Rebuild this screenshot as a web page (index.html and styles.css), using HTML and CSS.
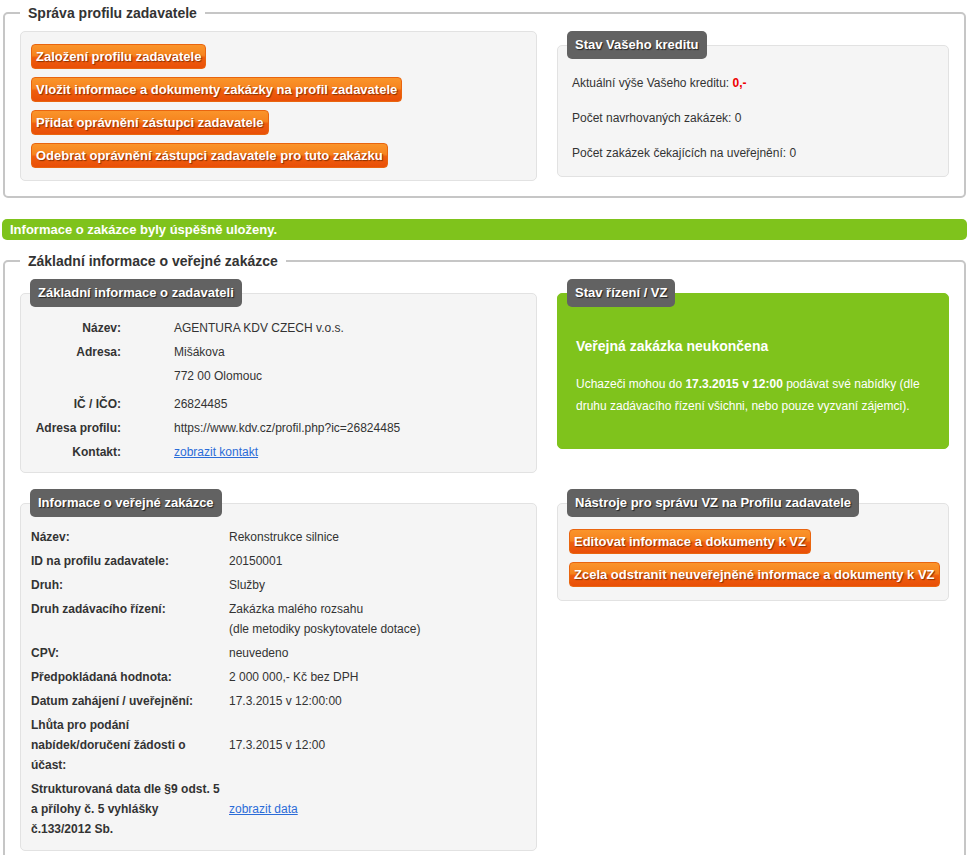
FILE: index.html
```html
<!DOCTYPE html>
<html lang="cs">
<head>
    <meta charset="UTF-8">
    <meta name="viewport" content="width=device-width, initial-scale=1.0">
    <title>Profil zadavatele</title>
    <link rel="stylesheet" href="styles.css">
</head>
<body>
    <fieldset class="sekce">
        <legend>Správa profilu zadavatele</legend>
        <div class="mrizka">
            <div class="box tlacitka">
                <a href="#" class="btn">Založení profilu zadavatele</a>
                <a href="#" class="btn">Vložit informace a dokumenty zakázky na profil zadavatele</a>
                <a href="#" class="btn">Přidat oprávnění zástupci zadavatele</a>
                <a href="#" class="btn">Odebrat oprávnění zástupci zadavatele pro tuto zakázku</a>
            </div>
            <div class="panel">
                <div class="stitek">Stav Vašeho kreditu</div>
                <div class="box kredit">
                    <p>Aktuální výše Vašeho kreditu: <span class="cervena">0,-</span></p>
                    <p>Počet navrhovaných zakázek: 0</p>
                    <p>Počet zakázek čekajících na uveřejnění: 0</p>
                </div>
            </div>
        </div>
    </fieldset>

    <div class="hlaska">Informace o zakázce byly úspěšně uloženy.</div>

    <fieldset class="sekce">
        <legend>Základní informace o veřejné zakázce</legend>
        <div class="mrizka">
            <div class="panel">
                <div class="stitek">Základní informace o zadavateli</div>
                <div class="box zadavatel">
                    <div class="popis">Název:</div>
                    <div class="hodnota">AGENTURA KDV CZECH v.o.s.</div>
                    <div class="popis">Adresa:</div>
                    <div class="hodnota">
                        <div class="radek">Mišákova</div>
                        <div class="radek">772 00 Olomouc</div>
                    </div>
                    <div class="popis">IČ / IČO:</div>
                    <div class="hodnota">26824485</div>
                    <div class="popis">Adresa profilu:</div>
                    <div class="hodnota">https://www.kdv.cz/profil.php?ic=26824485</div>
                    <div class="popis">Kontakt:</div>
                    <div class="hodnota"><a href="#">zobrazit kontakt</a></div>
                </div>
            </div>
            <div class="panel">
                <div class="stitek">Stav řízení / VZ</div>
                <div class="box zeleny">
                    <h2>Veřejná zakázka neukončena</h2>
                    <p>Uchazeči mohou do <b>17.3.2015 v 12:00</b> podávat své nabídky (dle<br>druhu zadávacího řízení všichni, nebo pouze vyzvaní zájemci).</p>
                </div>
            </div>
            <div class="panel">
                <div class="stitek">Informace o veřejné zakázce</div>
                <div class="box zakazka">
                    <div class="popis">Název:</div>
                    <div class="hodnota">Rekonstrukce silnice</div>
                    <div class="popis">ID na profilu zadavatele:</div>
                    <div class="hodnota">20150001</div>
                    <div class="popis">Druh:</div>
                    <div class="hodnota">Služby</div>
                    <div class="popis">Druh zadávacího řízení:</div>
                    <div class="hodnota">Zakázka malého rozsahu<br>(dle metodiky poskytovatele dotace)</div>
                    <div class="popis">CPV:</div>
                    <div class="hodnota">neuvedeno</div>
                    <div class="popis">Předpokládaná hodnota:</div>
                    <div class="hodnota">2 000 000,- Kč bez DPH</div>
                    <div class="popis">Datum zahájení / uveřejnění:</div>
                    <div class="hodnota">17.3.2015 v 12:00:00</div>
                    <div class="popis">Lhůta pro podání nabídek/doručení žádosti o účast:</div>
                    <div class="hodnota stred">17.3.2015 v 12:00</div>
                    <div class="popis">Strukturovaná data dle §9 odst. 5 a přílohy č. 5 vyhlášky č.133/2012 Sb.</div>
                    <div class="hodnota stred"><a href="#">zobrazit data</a></div>
                </div>
            </div>
            <div class="panel">
                <div class="stitek">Nástroje pro správu VZ na Profilu zadavatele</div>
                <div class="box tlacitka nastroje">
                    <a href="#" class="btn">Editovat informace a dokumenty k VZ</a>
                    <a href="#" class="btn">Zcela odstranit neuveřejněné informace a dokumenty k VZ</a>
                </div>
            </div>
        </div>
    </fieldset>
</body>
</html>
```

FILE: styles.css
```css
body {
    margin: 0;
    padding: 4px 3px 0 2px;
    font-family: "Liberation Sans", Arial, sans-serif;
    font-size: 12px;
    color: #333;
    background-color: #fff;
}
p {
    margin: 0;
}
a {
    color: #2b6cd8;
}
.sekce {
    margin: 0 1px;
    padding: 9px 15px 15px;
    border: 2px solid #c6c6c6;
    border-radius: 5px;
}
.sekce legend {
    padding: 0 8px;
    font-size: 14px;
    font-weight: bold;
    line-height: 18px;
    color: #333;
}
.mrizka {
    display: grid;
    grid-template-columns: 517px 1fr;
    column-gap: 20px;
    row-gap: 16px;
    align-items: start;
}
.box {
    background-color: #f5f5f5;
    border: 1px solid #e2e2e2;
    border-radius: 5px;
}
.panel {
    display: flex;
    flex-direction: column;
    align-items: flex-start;
}
.panel .box {
    align-self: stretch;
}
.stitek {
    position: relative;
    margin: 0 0 -14px 10px;
    padding: 0 8px;
    height: 28px;
    line-height: 28px;
    font-size: 13px;
    font-weight: bold;
    color: #fff;
    background-color: #626262;
    border-radius: 5px;
    text-shadow: 1px 1px 1px #222;
}
.tlacitka {
    display: flex;
    flex-direction: column;
    align-items: flex-start;
    gap: 8px;
    padding: 12px 10px;
}
.btn {
    display: block;
    padding: 3px 4px;
    font-size: 13px;
    font-weight: bold;
    line-height: 17px;
    white-space: nowrap;
    color: #fff;
    text-decoration: none;
    border: 1px solid #e9650f;
    border-radius: 4px;
    background: linear-gradient(to bottom, #fa942a 0%, #f6841f 45%, #ee5e0d 55%, #e94f08 100%);
    text-shadow: 1px 1px 1px #8a3000;
}
.nastroje {
    padding: 25px 0 13px 11px;
}
.kredit {
    padding: 27px 14px 13px;
}
.kredit p {
    line-height: 20px;
    margin-bottom: 15px;
}
.kredit p:last-child {
    margin-bottom: 0;
}
.cervena {
    color: #e00;
    font-weight: bold;
}
.hlaska {
    margin: 21px 0 12px;
    padding: 0 8px;
    line-height: 21px;
    font-size: 13px;
    font-weight: bold;
    color: #fff;
    background-color: #7fc31c;
    border-radius: 5px;
}
.zadavatel {
    display: grid;
    grid-template-columns: 86px 1fr;
    column-gap: 53px;
    padding: 22px 10px 8px 14px;
}
.zadavatel .popis {
    text-align: right;
}
.popis {
    font-weight: bold;
    padding: 2px 0;
    line-height: 20px;
}
.hodnota {
    padding: 2px 0;
    line-height: 20px;
}
.zadavatel .radek {
    padding-bottom: 4px;
}
.zeleny {
    padding: 42px 10px 31px 18px;
    color: #fff;
    background-color: #7fc31c;
    border-color: #7fc31c;
}
.zeleny h2 {
    margin: 0 0 17px;
    font-size: 14px;
    line-height: 20px;
}
.zeleny p {
    line-height: 22px;
}
.zakazka {
    display: grid;
    grid-template-columns: 196px 1fr;
    column-gap: 2px;
    padding: 21px 10px 9px 10px;
}
.zakazka .popis {
    padding-right: 7px;
}
.stred {
    align-self: center;
}
```
